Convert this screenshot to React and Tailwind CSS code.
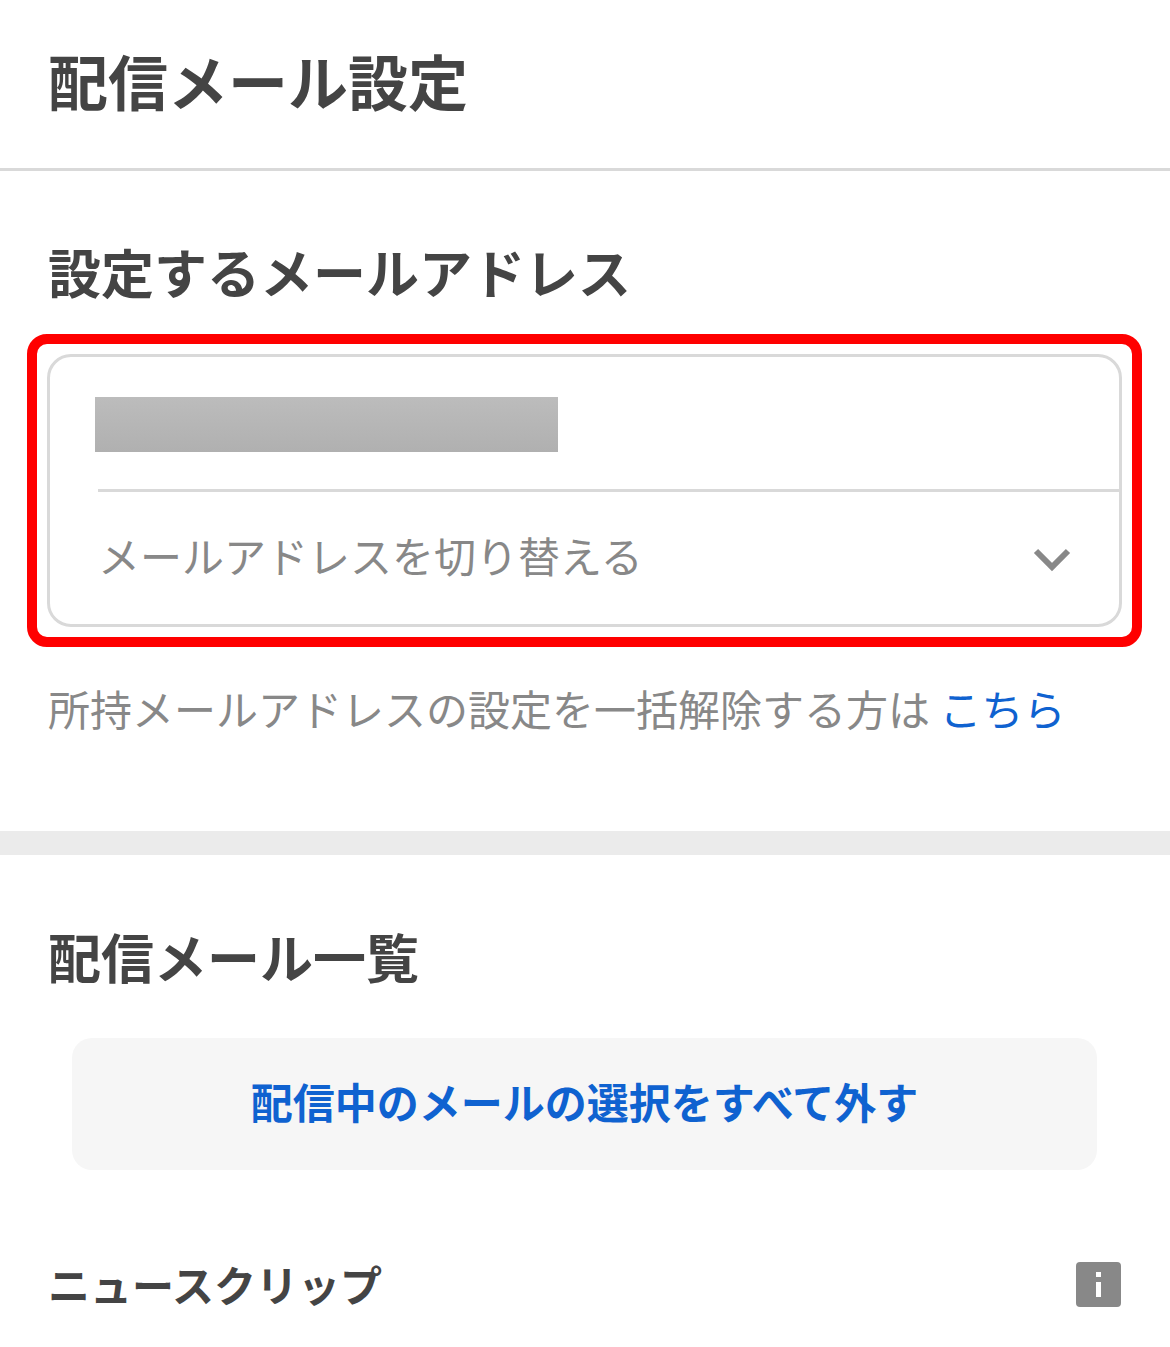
export default function App() {
  return (
    <main
      lang="ja"
      className="min-h-screen bg-white font-['Noto_Sans_CJK_JP',sans-serif] text-[#444444]"
    >
      <header className="border-b-3 border-[#d9d9d9] px-12 pt-[38px] pb-[46px]">
        <h1 className="text-[60px] leading-[84px] font-bold">配信メール設定</h1>
      </header>

      <section className="pt-[62px] pr-[49px] pb-[93px] pl-12">
        <h2 className="text-[53px] leading-[76px] font-bold">設定するメールアドレス</h2>
        <div className="-mx-[21px] mt-[25px] rounded-[20px] border-10 border-[#ff0000] p-[10px]">
          <div className="rounded-3xl border-3 border-[#d9d9d9] pl-12">
            <div className="border-b-3 border-[#d9d9d9] pt-10 pb-[37px]">
              <div className="-ml-[3px] h-[55px] w-[463px] bg-linear-to-b from-[#bcbcbc] to-[#b0b0b0]" />
            </div>
            <button
              type="button"
              className="flex h-[132px] w-full items-center justify-between pr-12 text-[42px] leading-[60px] text-[#888888]"
            >
              <span className="pb-1.5">メールアドレスを切り替える</span>
              <svg className="mt-1" width="38" height="24" viewBox="0 0 38 24" fill="none" stroke="#888888" strokeWidth="6" aria-hidden="true">
                <path d="M3 3 19 19 35 3" />
              </svg>
            </button>
          </div>
        </div>
        <p className="mt-[31px] text-[42px] leading-[60px] text-[#888888]">
          所持メールアドレスの設定を一括解除する方は{" "}
          <a href="#release" className="text-[#0f62d0]">こちら</a>
        </p>
      </section>

      <section className="border-t-24 border-[#ebebeb] pt-[63px] pr-[49px] pl-12">
        <h2 className="text-[53px] leading-[76px] font-bold">配信メール一覧</h2>
        <div className="mt-11 px-6">
          <button
            type="button"
            className="h-[132px] w-full rounded-[20px] bg-[#f6f6f6] pb-1.5 text-[42px] leading-[60px] font-bold text-[#0f62d0]"
          >
            配信中のメールの選択をすべて外す
          </button>
        </div>
        <div className="mt-[84px] flex items-center justify-between">
          <h3 className="text-[42px] leading-[60px] font-bold">ニュースクリップ</h3>
          <button type="button" aria-label="詳細">
            <svg width="45" height="45" viewBox="0 0 45 45" aria-hidden="true">
              <rect width="45" height="45" rx="4" fill="#888888" />
              <path d="M20 10h5v5h-5zM20 20h5v15h-5z" fill="#ffffff" />
            </svg>
          </button>
        </div>
      </section>
    </main>
  );
}
